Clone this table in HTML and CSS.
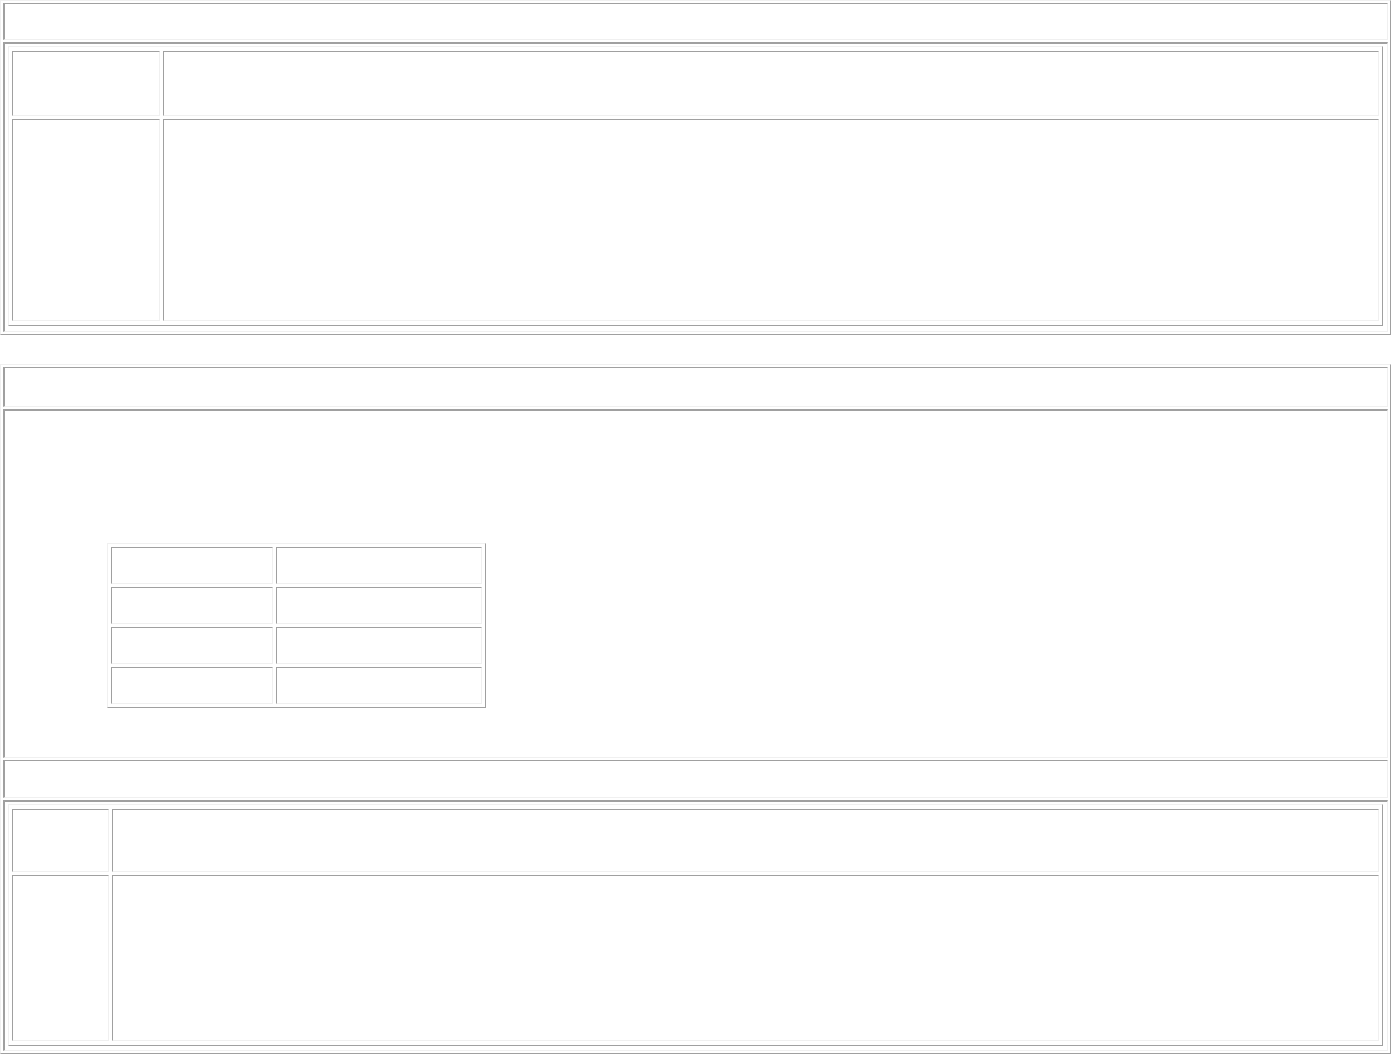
FILE: index.html
```html
<!DOCTYPE html>
<html lang="en">
  <head>
    <meta charset="UTF-8" />
    <meta name="viewport" content="width=device-width, initial-scale=1.0" />
    <title>Layout</title>
    <link rel="stylesheet" href="styles.css">
  </head>
  <body>
    <table class="frame">
      <tr><td class="head head-top"></td></tr>
      <tr>
        <td class="body body-top">
          <table class="grid grid-top">
            <tr><td class="key row-short"></td><td></td></tr>
            <tr><td class="key row-tall"></td><td></td></tr>
          </table>
        </td>
      </tr>
    </table>

    <table class="frame frame-bottom">
      <tr><td class="head head-first"></td></tr>
      <tr>
        <td class="body body-mid">
          <table class="matrix">
            <tr><td class="key"></td><td></td></tr>
            <tr><td class="key"></td><td></td></tr>
            <tr><td class="key"></td><td></td></tr>
            <tr><td class="key"></td><td></td></tr>
          </table>
        </td>
      </tr>
      <tr><td class="head head-second"></td></tr>
      <tr>
        <td class="body body-end">
          <table class="grid grid-end">
            <tr><td class="key row-short"></td><td></td></tr>
            <tr><td class="key row-tall"></td><td></td></tr>
          </table>
        </td>
      </tr>
    </table>
  </body>
</html>
```

FILE: styles.css
```css
* {
  box-sizing: border-box;
}

body {
  margin: 0;
  background: #ffffff;
  font-family: "Liberation Serif", serif;
}

table {
  border-collapse: separate;
  border: 1px solid;
  border-color: #f0f0f0 #a0a0a0 #a0a0a0 #f0f0f0;
  table-layout: fixed;
}

td {
  border: 1px solid;
  border-color: #a0a0a0 #f0f0f0 #f0f0f0 #a0a0a0;
  padding: 1px;
}

.frame {
  width: 1391px;
  border-spacing: 2px;
}

.frame-bottom {
  margin-top: 29px;
}

.head {
  border-left-width: 2px;
}

.head-top {
  height: 37px;
}

.head-first {
  height: 40px;
}

.head-second {
  height: 38px;
}

.body {
  border-width: 2px 1px 1px 2px;
  padding: 2px 3px;
  vertical-align: top;
}

.body-top {
  height: 290px;
}

.body-mid {
  height: 349px;
}

.body-end {
  height: 251px;
}

.grid {
  width: 1375px;
  border-spacing: 3px;
  padding: 1px 0;
}

.grid-top .key {
  width: 148px;
}

.grid-top .row-short {
  height: 65px;
}

.grid-top .row-tall {
  height: 202px;
}

.grid-end .key {
  width: 97px;
}

.grid-end .row-short {
  height: 63px;
}

.grid-end .row-tall {
  height: 166px;
}

.matrix {
  width: 379px;
  border-spacing: 3px;
  margin: 130px 0 0 99px;
}

.matrix td {
  height: 37px;
}

.matrix .key {
  width: 162px;
}
```
